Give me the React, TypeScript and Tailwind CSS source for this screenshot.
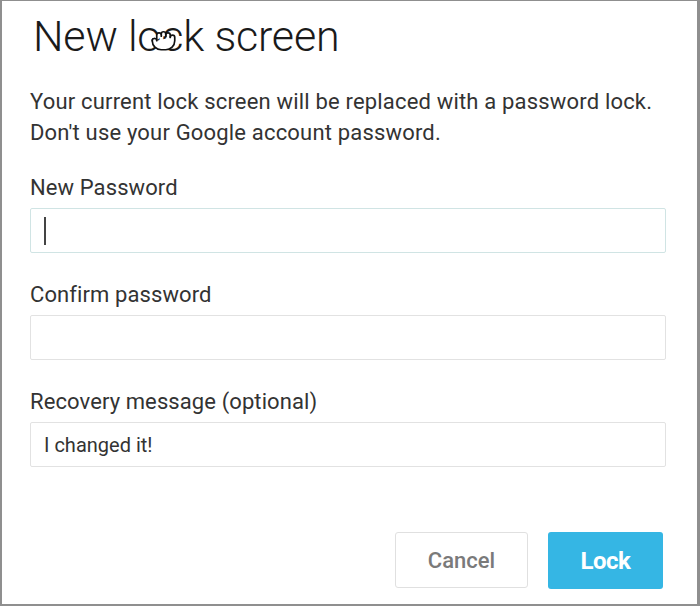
import { Grab } from "lucide-react"

function Field({ label, value, focused }: { label: string; value?: string; focused?: boolean }) {
  return (
    <div className="flex flex-col">
      <label className="text-[22px] leading-[26px] tracking-[0.1px] text-[#333]">{label}</label>
      <div
        className={
          "mt-[7px] flex h-[45px] items-center rounded-[2px] border px-[12px] " +
          (focused ? "border-[#d0e4e4]" : "border-[#e2e2e2]")
        }
      >
        {focused && <span className="ml-[1px] h-[28px] w-[2px] bg-[#444]" />}
        {value && <span className="ml-[1px] text-[20px] text-[#333]">{value}</span>}
      </div>
    </div>
  )
}

export default function App() {
  return (
    <div
      className="h-[606px] w-[700px] border-l-2 border-r-[3px] border-t border-b-[2px] border-[#8f8f8f] bg-white"
      style={{ fontFamily: "Roboto, 'Noto Sans', sans-serif" }}
    >
      <div className="relative flex h-full flex-col pl-[28px] pr-[31px]">
        {/* Title */}
        <h1 className="ml-[3px] mt-[10px] text-[43px] font-light leading-[50px] tracking-[-0.2px] text-[#1a1a1a]">
          New lock screen
        </h1>
        {/* mouse cursor over the title */}
        <Grab
          className="absolute left-[148px] top-[24px] h-[27px] w-[27px] text-[#111]"
          fill="white"
          strokeWidth={1.5}
        />

        {/* Message */}
        <p className="mt-[25px] text-[22px] leading-[31px] tracking-[0.18px] text-[#333]">
          Your current lock screen will be replaced with a password lock.
          <br />
          Don't use your Google account password.
        </p>

        <div className="mt-[27px] flex flex-col gap-[29px]">
          <Field label="New Password" focused />
          <Field label="Confirm password" />
          <Field label="Recovery message (optional)" value="I changed it!" />
        </div>

        {/* Actions */}
        <div className="mt-[65px] flex justify-end gap-[20px] pr-[3px]">
          <button className="h-[56px] w-[133px] rounded-[3px] border border-[#e0e0e0] bg-white text-[22px] font-medium text-[#7a7a7a]">
            Cancel
          </button>
          <button className="h-[57px] w-[115px] rounded-[3px] bg-[#35b6e4] text-[24px] font-bold tracking-[-0.5px] text-white">
            Lock
          </button>
        </div>
      </div>
    </div>
  )
}
